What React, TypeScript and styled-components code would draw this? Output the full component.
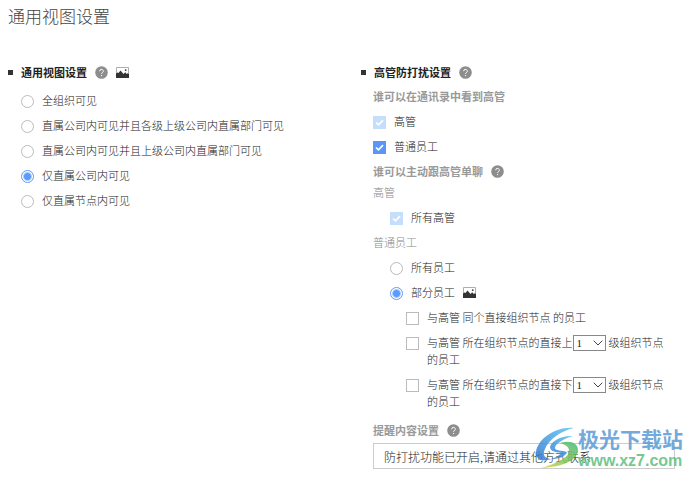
import React, { useId, useState } from 'react';
import styled, { createGlobalStyle, css } from 'styled-components';

const Global = createGlobalStyle`
  * { box-sizing: border-box; }
  body {
    margin: 0;
    background: #fff;
    color: #222;
    font: 300 11px/17px "Noto Sans CJK SC", sans-serif;
  }
  input, select { font: inherit; color: inherit; margin: 0; }
`;

const Page = styled.main`
  position: relative;
  padding: 4px 19px 6px 8px;
`;
const Title = styled.h1`
  margin: 0 0 36px;
  font-size: 17px;
  line-height: 24px;
  font-weight: 300;
  color: #444;
`;
const Columns = styled.div`
  display: grid;
  grid-template-columns: 9fr 8fr;
  align-items: start;
`;
const Section = styled.section`
  min-width: 0;
`;
const SectionTitle = styled.h2`
  display: flex;
  align-items: center;
  gap: 8px;
  height: 17px;
  margin: 0 0 3px;
  font-size: 11px;
  font-weight: 700;
  color: #222;
  &::before {
    content: '';
    width: 5px;
    height: 5px;
    background: #333;
  }
`;
const Body = styled.div`
  padding-left: 12px;
`;
const SubTitle = styled.h3`
  display: flex;
  align-items: center;
  gap: 8px;
  height: 25px;
  margin: 0;
  font-size: 11px;
  font-weight: 700;
  color: #999;
`;
const Options = styled.div<{ $indent?: number; $top?: number; $bottom?: number }>`
  padding: ${p => p.$top ?? 0}px 0 ${p => p.$bottom ?? 0}px ${p => p.$indent ?? 0}px;
`;
const GroupName = styled.p`
  margin: 0 0 4px;
  color: #888;
  ${Options} + & { margin-top: 4px; }
`;
const Option = styled.div`
  display: flex;
  align-items: flex-start;
  gap: 8px;
  padding: 4px 8px 4px 0;
  & > svg { margin-top: 3px; }
`;
const mark = css`
  appearance: none;
  flex: none;
  width: 13px;
  height: 13px;
  margin-top: 3px;
  border: 1px solid #bbb;
  background: #fff;
`;
const RadioInput = styled.input`
  ${mark}
  border-radius: 50%;
  &:checked {
    border-color: #5b9bff;
    background: radial-gradient(circle, #5b9bff 3px, #fff 5px);
  }
`;
const CheckCell = styled.span`
  display: grid;
  flex: none;
  & > * { grid-area: 1 / 1; }
  svg { margin-top: 3px; pointer-events: none; }
`;
const CheckInput = styled.input`
  ${mark}
  &:checked { border-color: #5b95f9; background: #5b95f9; }
  &:checked:disabled { border-color: #c5dffa; background: #c5dffa; }
`;
const SelectCell = styled.span`
  display: inline-grid;
  vertical-align: top;
  align-items: center;
  height: 17px;
  margin-right: 3px;
  & > * { grid-area: 1 / 1; }
  svg { justify-self: end; margin-right: 3px; pointer-events: none; }
`;
const LevelSelect = styled.select`
  appearance: none;
  width: 33px;
  height: 16px;
  padding: 0 3px;
  border: 1px solid #888;
  border-radius: 0;
  background: #fff;
  font-family: "Liberation Serif", serif;
  line-height: 14px;
`;
const TextInput = styled.input`
  display: block;
  width: 100%;
  height: 26px;
  padding: 0 10px;
  border: 1px solid #ccc;
  font-size: 12px;
`;
const Watermark = styled.aside`
  position: absolute;
  right: 11px;
  bottom: 5px;
  display: flex;
  align-items: center;
  pointer-events: none;
  opacity: 0.85;
`;
const Brand = styled.div`
  font-size: 21px;
  line-height: 26px;
  font-weight: 700;
  color: #5b9bd5;
`;
const Site = styled.div`
  font: 700 16px/19px "Liberation Sans", sans-serif;
  color: #5dbf80;
`;

const Help = () => (
  <svg width="13" height="13" viewBox="0 0 13 13" role="img" aria-label="帮助">
    <circle cx="6.5" cy="6.5" r="6.3" fill="#8d8d8d" />
    <path d="M4.7 5.2a1.8 1.8 0 1 1 2.7 1.5c-.7.4-.9.6-.9 1.2" fill="none" stroke="#fff" strokeWidth="1" />
    <circle cx="6.5" cy="9.6" r=".7" fill="#fff" />
  </svg>
);
const Picture = () => (
  <svg width="13" height="11" viewBox="0 0 13 11" role="img" aria-label="图片">
    <path d="M.5 10.5V.5h12v10" fill="#fff" stroke="#999" strokeWidth=".8" />
    <path d="M0 11V6.5L1.5 5.5l1 .5L4.5 3.5 7.5 7l1.7-1.7L10.7 7l1-.8L13 7v4z" fill="#333" />
    <circle cx="9.7" cy="3.1" r=".9" fill="#333" />
  </svg>
);

const Radio = ({ name, label, initial, children }: { name: string; label: string; initial?: boolean; children?: React.ReactNode }) => {
  const id = useId();
  return (
    <Option>
      <RadioInput type="radio" id={id} name={name} defaultChecked={initial} />
      <label htmlFor={id}>{label}</label>
      {children}
    </Option>
  );
};

const Check = ({ initial, disabled, children }: { initial?: boolean; disabled?: boolean; children: React.ReactNode }) => {
  const id = useId();
  const [on, setOn] = useState(!!initial);
  return (
    <Option>
      <CheckCell>
        <CheckInput type="checkbox" id={id} checked={on} disabled={disabled} onChange={e => setOn(e.target.checked)} />
        {on && (
          <svg width="13" height="13" viewBox="0 0 13 13" aria-hidden="true">
            <path d="M3 6.5l2.5 2.4L10 4.2" fill="none" stroke="#fff" strokeWidth="1.7" />
          </svg>
        )}
      </CheckCell>
      <label htmlFor={id}>{children}</label>
    </Option>
  );
};

const Level = ({ label }: { label: string }) => (
  <SelectCell>
    <LevelSelect aria-label={label} defaultValue="1">
      {[1, 2, 3, 4, 5].map(n => <option key={n}>{n}</option>)}
    </LevelSelect>
    <svg width="10" height="6" viewBox="0 0 10 6" aria-hidden="true">
      <path d="M.7.7L5 5 9.3.7" fill="none" stroke="#444" />
    </svg>
  </SelectCell>
);

const Logo = () => (
  <svg width="43" height="42" viewBox="0 0 43 42" aria-hidden="true">
    <defs>
      <linearGradient id="sky" x1="1" y1="0" x2="0" y2="1">
        <stop offset="0" stopColor="#62c6f2" />
        <stop offset="1" stopColor="#2f78cf" />
      </linearGradient>
      <linearGradient id="leaf" x1="1" y1="0" x2="0" y2="1">
        <stop offset="0" stopColor="#43b978" />
        <stop offset=".6" stopColor="#8ccb58" />
        <stop offset="1" stopColor="#f0cf3f" />
      </linearGradient>
    </defs>
    <path d="M39 1C22-1 3 11 1 25c-1 7 7 10 16 7-7 0-10-4-7-10C14 12 26 4 39 1z" fill="url(#sky)" />
    <path d="M38 9C27 8 16 14 15 20c0 4 5 5 11 6-2 3-6 5-10 6 8 0 14-2 16-7-5-2-12-1-12-4 0-4 8-9 18-12z" fill="url(#sky)" />
    <path d="M25 16c10-3 18 0 18 7 0 10-15 17-37 18 14-4 28-10 28-17 0-4-3-6-9-8z" fill="url(#leaf)" />
  </svg>
);

export default function App() {
  return (
    <>
      <Global />
      <Page>
        <Title>通用视图设置</Title>
        <Columns>
          <Section>
            <SectionTitle>通用视图设置 <Help /><Picture /></SectionTitle>
            <Body>
              <Options $indent={1} $top={4}>
                <Radio name="view" label="全组织可见" />
                <Radio name="view" label="直属公司内可见并且各级上级公司内直属部门可见" />
                <Radio name="view" label="直属公司内可见并且上级公司内直属部门可见" />
                <Radio name="view" label="仅直属公司内可见" initial />
                <Radio name="view" label="仅直属节点内可见" />
              </Options>
            </Body>
          </Section>
          <Section>
            <SectionTitle>高管防打扰设置 <Help /></SectionTitle>
            <Body>
              <SubTitle>谁可以在通讯录中看到高管</SubTitle>
              <Options>
                <Check initial disabled>高管</Check>
                <Check initial>普通员工</Check>
              </Options>
              <SubTitle>谁可以主动跟高管单聊 <Help /></SubTitle>
              <GroupName>高管</GroupName>
              <Options $indent={17}>
                <Check initial disabled>所有高管</Check>
              </Options>
              <GroupName>普通员工</GroupName>
              <Options $indent={17} $bottom={4}>
                <Radio name="staff" label="所有员工" />
                <Radio name="staff" label="部分员工" initial><Picture /></Radio>
                <Options $indent={16}>
                  <Check>与高管 同个直接组织节点 的员工</Check>
                  <Check>与高管 所在组织节点的直接上<Level label="上级层数" />级组织节点的员工</Check>
                  <Check>与高管 所在组织节点的直接下<Level label="下级层数" />级组织节点的员工</Check>
                </Options>
              </Options>
              <SubTitle as="label" htmlFor="notice">提醒内容设置 <Help /></SubTitle>
              <TextInput id="notice" defaultValue="防打扰功能已开启,请通过其他方式联系" />
            </Body>
          </Section>
        </Columns>
        <Watermark>
          <Logo />
          <div>
            <Brand>极光下载站</Brand>
            <Site>www.xz7.com</Site>
          </div>
        </Watermark>
      </Page>
    </>
  );
}
